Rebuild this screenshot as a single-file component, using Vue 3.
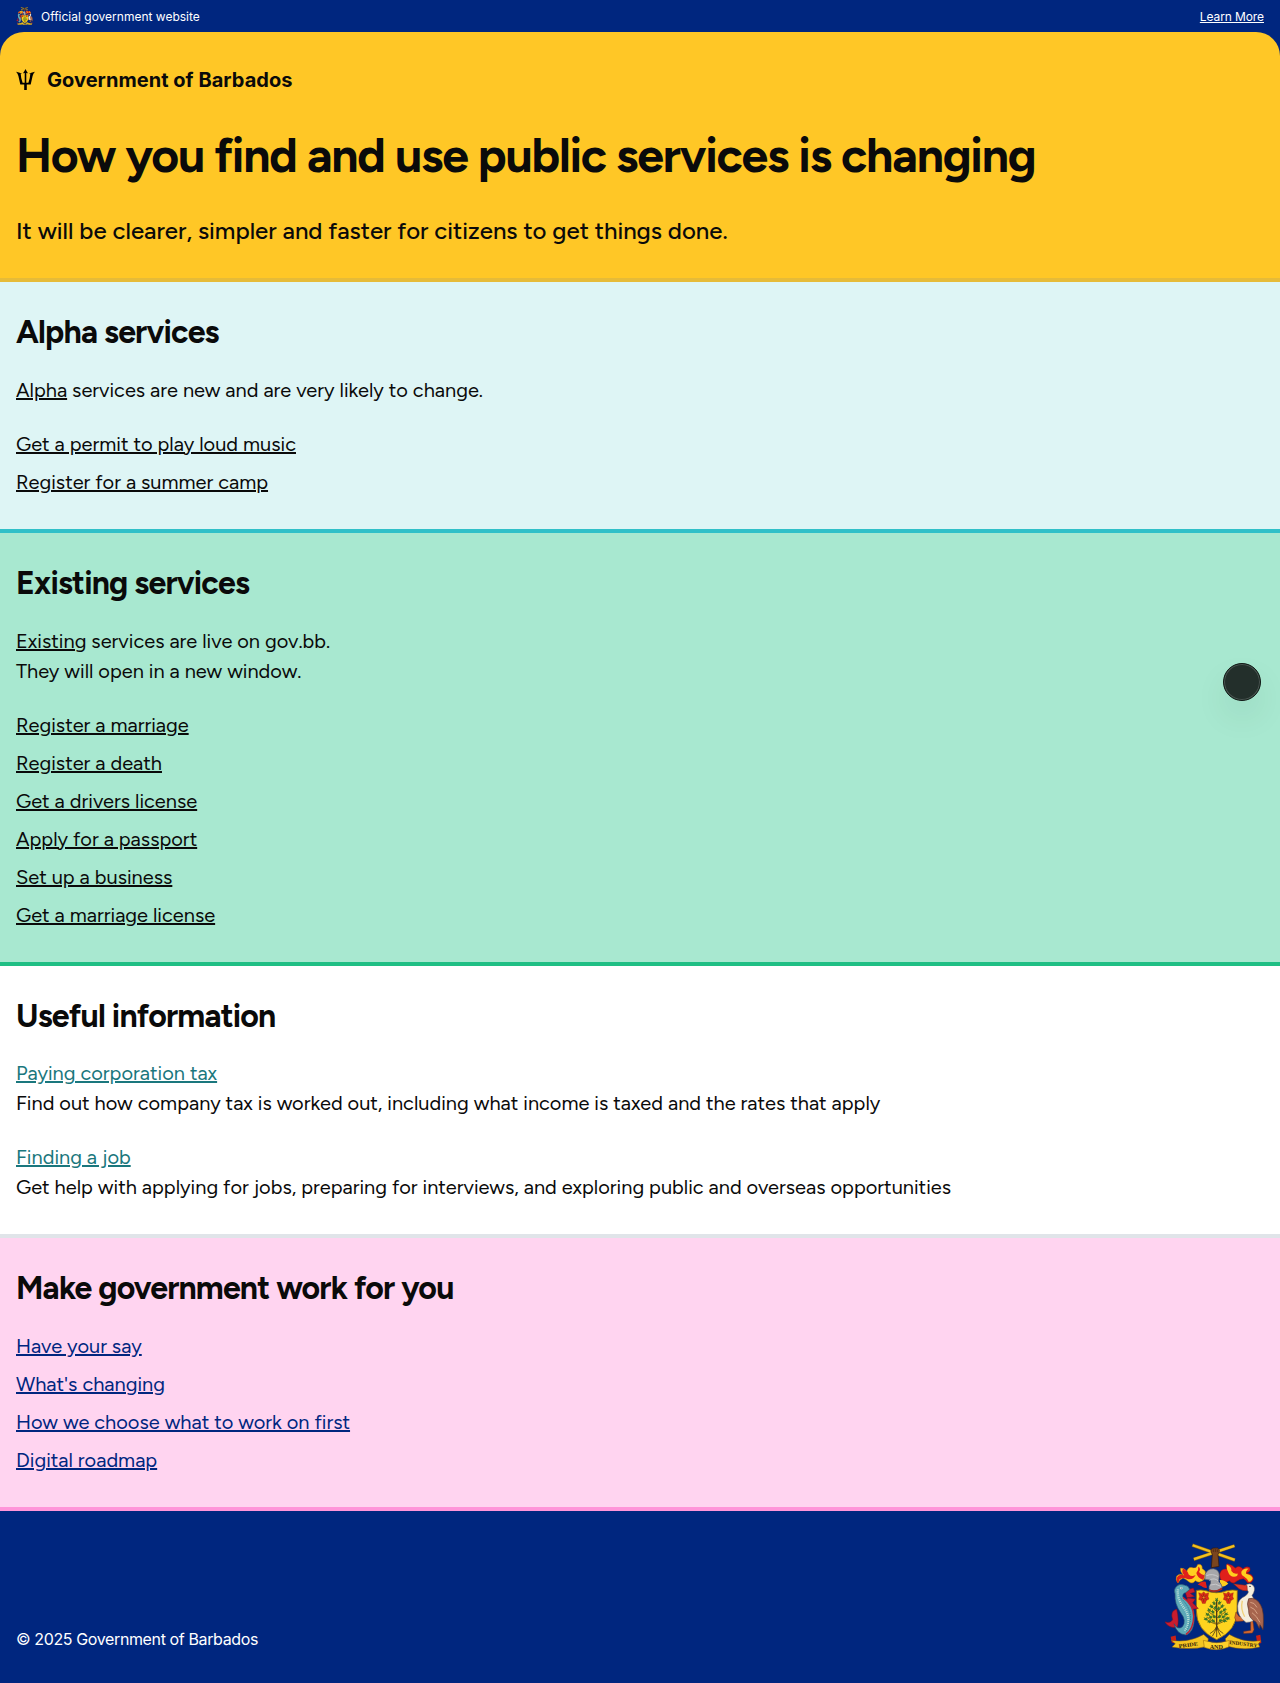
<script setup>
const alphaServices = ['Get a permit to play loud music', 'Register for a summer camp']

const existingServices = [
  'Register a marriage',
  'Register a death',
  'Get a drivers license',
  'Apply for a passport',
  'Set up a business',
  'Get a marriage license',
]

const usefulInformation = [
  {
    title: 'Paying corporation tax',
    text: 'Find out how company tax is worked out, including what income is taxed and the rates that apply',
  },
  {
    title: 'Finding a job',
    text: 'Get help with applying for jobs, preparing for interviews, and exploring public and overseas opportunities',
  },
]

const governmentLinks = [
  'Have your say',
  "What's changing",
  'How we choose what to work on first',
  'Digital roadmap',
]

// Leaf tufts of the fig tree on the shield: x, y, rotation
const leaves = [
  [200, 212, 0], [192, 222, -35], [209, 221, 35], [184, 232, -50], [217, 231, 50],
  [196, 236, -25], [206, 238, 30], [177, 243, -60], [224, 242, 60], [188, 248, -45],
  [213, 249, 45], [172, 256, -75], [229, 255, 75], [181, 264, -65], [221, 263, 65],
  [192, 262, -40], [209, 262, 40], [167, 270, -80], [234, 268, 80], [177, 277, -80],
  [225, 275, 80], [189, 275, -60], [212, 274, 60],
]
</script>

<template>
  <div class="page">
    <div class="official">
      <div class="official-label">
        <svg class="official-crest" viewBox="45 42 297 323" aria-hidden="true"><use href="#coat-of-arms" /></svg>
        <span>Official government website</span>
      </div>
      <a class="learn-more">Learn More</a>
    </div>

    <div class="hero-backdrop">
      <header class="hero">
        <div class="brand">
          <svg class="trident" viewBox="0 0 19 21" aria-hidden="true">
            <path d="M9.500 0 Q10.600 2.500 12 4.200 L10.300 4 L10.300 13.700 L12.400 13.700 Q14.100 9.300 14.300 4.700 L12.700 5 Q14.700 3.700 18.900 2.800 Q17.200 4.600 16.600 6.900 L14.700 15.500 L10.800 15.500 L10.800 21 L8.200 21 L8.200 15.500 L4.300 15.500 L2.400 6.900 Q1.800 4.600 .1 2.800 Q4.300 3.700 6.300 5 L4.700 4.700 Q4.900 9.300 6.600 13.700 L8.700 13.700 L8.700 4 L7 4.200 Q8.400 2.500 9.500 0 Z" />
          </svg>
          <span>Government of Barbados</span>
        </div>
        <h1>How you find and use public services is changing</h1>
        <p>It will be clearer, simpler and faster for citizens to get things done.</p>
      </header>
    </div>

    <main>
      <section class="alpha">
        <h2>Alpha services</h2>
        <p class="intro"><a>Alpha</a> services are new and are very likely to change.</p>
        <ul>
          <li v-for="name in alphaServices" :key="name"><a>{{ name }}</a></li>
        </ul>
      </section>

      <section class="existing">
        <h2>Existing services</h2>
        <p class="intro"><a>Existing</a> services are live on gov.bb.<br />They will open in a new window.</p>
        <ul>
          <li v-for="name in existingServices" :key="name"><a>{{ name }}</a></li>
        </ul>
      </section>

      <section class="useful">
        <h2>Useful information</h2>
        <div class="articles">
          <div v-for="item in usefulInformation" :key="item.title">
            <a>{{ item.title }}</a>
            <p>{{ item.text }}</p>
          </div>
        </div>
      </section>

      <section class="work">
        <h2>Make government work for you</h2>
        <ul>
          <li v-for="name in governmentLinks" :key="name"><a>{{ name }}</a></li>
        </ul>
      </section>
    </main>

    <footer>
      <span>© 2025 Government of Barbados</span>
      <svg class="footer-crest" viewBox="45 42 297 323" role="img" aria-label="Coat of arms">
        <g id="coat-of-arms">
          <!-- crossed sugar canes and raised arm -->
          <path d="M127 48 L255 93 M131 91 L254 50" stroke="#8a6310" stroke-width="10" />
          <path d="M128 48.500 L254 92.500 M132 90.500 L253 50.500" stroke="#f0c021" stroke-width="7" />
          <path d="M187 76 Q181 69 183 61 Q188 55 195 57 Q203 54 208 62 Q209 70 204 77 L207 112 L184 116 Z" fill="#7a451f" stroke="#321608" stroke-width="2" />
          <path d="M190 61 v8 M196 60 v9 M202 61 v8" stroke="#321608" stroke-width="1.500" />

          <!-- mantling -->
          <path d="M164 150 Q150 166 136 155 Q128 167 116 158 Q108 150 99 147 Q89 151 84 162 Q75 153 80 141 Q87 132 99 137 Q89 126 92 117 Q104 117 110 127 Q116 111 129 116 Q139 119 143 106 Q157 103 157 119 Q168 124 168 137 Z" fill="#ffcf1f" stroke="#a25a12" stroke-width="1.500" />
          <path d="M99 118 Q113 123 116 136 Q125 145 137 138 Q129 154 112 150 Q101 143 88 151 Q87 160 83 162 Q76 149 84 141 Q94 134 103 139 Q93 128 99 118 Z M145 112 Q154 119 147 129 Q154 138 164 139 L160 153 Q142 147 139 132 Q146 125 145 112 Z M143 166 Q155 155 167 158 L171 176 Q160 178 154 171 Z" fill="#e0201b" />
          <path d="M211 150 Q224 166 238 155 Q248 168 259 157 Q269 150 280 149 Q289 153 292 161 Q304 164 310 151 Q310 137 297 134 L290 132 Q304 128 299 115 Q288 109 279 120 Q267 106 256 117 Q247 107 232 104 Q226 110 230 120 Q213 118 209 136 Z" fill="#e0201b" stroke="#8e1410" stroke-width="1.500" />
          <path d="M230 106 Q246 112 244 126 Q251 136 263 133 Q264 143 252 143 Q239 142 235 130 Q229 118 230 106 Z M274 128 Q282 116 296 119 Q287 125 288 134 Q303 137 308 147 Q304 160 296 158 Q293 149 282 142 Q273 139 274 128 Z M209 153 Q222 151 235 164 Q224 174 213 174 Z" fill="#ffcf1f" />

          <!-- shield -->
          <path d="M139 184 Q153 181 168 185 Q200 197 230 185 Q247 181 262 184 L261 245 Q261 304 200 332 Q139 304 139 245 Z" fill="#ffd41f" stroke="#8b6413" stroke-width="2.500" />
          <g fill="none" stroke="#4f3b17" stroke-linecap="round">
            <path d="M200 214 V302" stroke-width="4" />
            <path d="M200 248 L181 229 M200 250 L219 230 M200 266 L174 247 M200 267 L227 248 M200 284 L171 265 M200 284 L232 265 M200 286 L178 278 M201 286 L224 276" stroke-width="2" />
            <path d="M200 293 Q195 306 181 313 M200 293 Q195 310 188 320 M200 294 V323 M201 293 Q206 306 219 313 M201 293 Q205 310 211 319" stroke-width="2.500" />
          </g>
          <g fill="#3d7428">
            <path
              v-for="([x, y, r], i) in leaves"
              :key="i"
              :transform="`translate(${x} ${y}) rotate(${r})`"
              d="M0 7 L-6 1 L-3 1 L-4 -6 L0 -3 L4 -7 L3 1 L6 1 Z"
            />
          </g>
          <g v-for="x in [161, 235]" :key="x" :transform="`translate(${x} 205)`">
            <path d="M-15 -14 L-6 -11 L0 -17 L6 -11 L15 -14 L13 -3 L16 5 L8 9 L5 18 L-4 18 L-7 9 L-15 6 L-12 -3 Z" fill="#dc2a18" stroke="#8d2510" stroke-width="1" />
            <path d="M-9 -7 L9 7 M9 -7 L-8 7 M0 -11 V13" stroke="#6f2d0d" stroke-width="1.800" />
            <circle r="3" fill="#e8901f" />
          </g>

          <!-- helmet -->
          <path d="M165 136 Q172 119 190 119 Q207 121 208 139 L206 157 Q215 164 217 176 Q201 191 177 183 L177 171 Q184 164 181 153 L165 151 Z" fill="#a7a7aa" stroke="#55565c" stroke-width="2" />
          <path d="M169 140 Q187 132 205 143 M178 154 Q193 144 205 156 M181 168 Q197 161 213 172" fill="none" stroke="#cfcfd1" stroke-width="2.500" />
          <path d="M177 180 Q195 189 216 175 L217 181 Q198 193 177 186 Z" fill="#a72822" />

          <!-- dolphin -->
          <path d="M80 240 Q59 246 68 272 Q61 284 44 278 Q57 299 82 295 Q88 275 80 240 Z M104 184 L130 177 L135 189 L121 193 L134 202 L111 207 Z M111 206 L136 210 L128 222 L145 238 L125 241 L134 257 L112 251 Z" fill="#c91c2f" stroke="#75101e" stroke-width="1.500" />
          <path d="M79 172 Q89 162 103 168 Q116 169 119 181 L107 191 Q96 193 99 205 Q133 227 133 262 Q134 308 108 318 Q80 316 72 284 Q83 304 97 293 Q111 276 92 251 Q73 225 75 194 Q69 183 79 172 Z" fill="#5da9b8" stroke="#244f70" stroke-width="2" />
          <path d="M84 181 Q79 210 105 240 Q126 276 104 305" fill="none" stroke="#bce0d8" stroke-width="7" stroke-dasharray="3 3" />
          <path d="M99 205 Q131 229 131 262 Q130 300 108 316" fill="none" stroke="#c91c2f" stroke-width="4" />
          <path d="M92 207 Q119 231 122 263 Q120 292 107 309" fill="none" stroke="#2d7a91" stroke-width="3" stroke-dasharray="4 3" />
          <circle cx="94" cy="177" r="3.500" fill="#fff" />
          <circle cx="94" cy="177" r="1.500" fill="#111" />

          <!-- pelican -->
          <path d="M286 264 L280 276 L259 277 L254 266 L258 249 L267 262 Z M302 273 V304 L281 307 L281 313 L307 312 L312 302 L308 272 Z" fill="#d66a31" stroke="#763214" stroke-width="1.500" />
          <path d="M285 170 Q299 158 311 171 Q318 183 306 199 Q319 220 324 257 Q313 281 288 280 Q261 262 263 231 Q265 209 286 201 Q302 187 290 183 Z" fill="#f4efdf" stroke="#76665c" stroke-width="1.500" />
          <path d="M296 209 Q319 203 332 228 Q344 248 339 302 L330 287 L328 298 L318 279 Q294 267 296 243 Q289 223 296 209 Z" fill="#a7654e" stroke="#5b3029" stroke-width="2" />
          <path d="M301 220 Q313 219 321 235 M301 234 Q315 238 322 254 M306 251 Q320 260 330 280" fill="none" stroke="#d7a184" stroke-width="3" />
          <path d="M250 164 L291 169 L292 184 Q280 187 267 179 Z" fill="#df3828" stroke="#811d18" stroke-width="1.500" />
          <circle cx="300" cy="172" r="2" fill="#111" />
          <path d="M277 215 Q271 239 284 263" fill="none" stroke="#f0d179" stroke-width="4" />

          <!-- motto ribbon -->
          <path d="M62 323 L77 319 L80 344 L65 340 Z M318 320 L331 317 L334 342 L322 345 Z" fill="#c92118" />
          <path d="M64 334 Q117 342 161 316 L175 329 L171 352 Q119 364 66 354 L76 344 Z M333 335 Q281 342 238 316 L226 329 L230 351 Q281 366 329 354 L325 344 Z" fill="#f5c521" stroke="#8a5c0c" stroke-width="1.500" />
          <path d="M160 334 L174 337 Q200 345 227 337 L238 334 L236 354 Q200 369 163 355 Z" fill="#ffd12a" stroke="#8a5c0c" stroke-width="1.500" />
          <g fill="#33220a" font-family="Liberation Serif, serif" font-size="16" font-weight="700" letter-spacing="0">
            <text x="86" y="353" textLength="58" lengthAdjust="spacingAndGlyphs" transform="rotate(-8 115 347)">PRIDE</text>
            <text x="179" y="359" textLength="40" lengthAdjust="spacingAndGlyphs">AND</text>
            <text x="238" y="350" textLength="84" lengthAdjust="spacingAndGlyphs" transform="rotate(7 280 345)">INDUSTRY</text>
          </g>
        </g>
      </svg>
    </footer>

    <button class="floating" aria-label="Open toolbar"></button>
  </div>
</template>

<style>
body {
  margin: 0;
}
</style>

<style scoped>
.page {
  position: relative;
  font-family: Figtree, Lato, sans-serif;
  font-size: 20px;
  line-height: 30px;
  color: #0a0a0a;
}
h1,
h2,
p,
ul {
  margin: 0;
  padding: 0;
}
ul {
  display: flex;
  flex-direction: column;
  gap: 8px;
  list-style: none;
}
a {
  text-decoration: underline;
  text-decoration-thickness: 2px;
}
.official {
  display: flex;
  justify-content: space-between;
  align-items: center;
  height: 32px;
  padding: 0 16px;
  background: #00267f;
  color: #fff;
  font: 12px/18px Inter, sans-serif;
}
.official-label {
  display: flex;
  align-items: center;
  gap: 8px;
}
.official-label span,
.learn-more {
  padding-top: 2px;
}
.official-crest {
  width: 17px;
  height: 18px;
}
.learn-more {
  letter-spacing: -0.1px;
  text-decoration-thickness: 1px;
}
.hero-backdrop {
  background: #00267f;
}
.hero-backdrop::after {
  content: '';
  display: block;
  height: 4px;
  background: #e6bb38;
}
.hero {
  display: flex;
  flex-direction: column;
  gap: 32px;
  padding: 32px 16px;
  border-radius: 24px 24px 0 0;
  background: #ffc726;
}
.brand {
  display: flex;
  align-items: center;
  gap: 12px;
  height: 32px;
  font: 700 20px/32px Inter, sans-serif;
  letter-spacing: 0.04px;
}
.trident {
  width: 19px;
  height: 21px;
  margin-bottom: 1px;
}
h1 {
  font-size: 48px;
  line-height: 55.2px;
  font-weight: 700;
  letter-spacing: -0.025em;
}
.hero p {
  margin: 0.6px 0 -0.6px;
  font-size: 24px;
  line-height: 30.8px;
  font-weight: 500;
}
section {
  display: flex;
  flex-direction: column;
  gap: 24px;
  padding: 32px 16px;
  border-bottom: 4px solid;
}
h2 {
  font-size: 32px;
  line-height: 36.8px;
  font-weight: 700;
  letter-spacing: -0.025em;
}
.alpha {
  background: #def5f5;
  border-color: #30c0c8;
}
.existing {
  background: #a8e8d0;
  border-color: #1fbf84;
}
.useful {
  background: #fff;
  border-color: #e0e4e9;
}
.useful a {
  color: #1a777d;
}
.articles {
  display: flex;
  flex-direction: column;
  gap: 24px;
}
.work {
  background: #ffd4f0;
  border-color: #ff94d9;
}
.work a {
  color: #00267f;
}
footer {
  display: flex;
  justify-content: space-between;
  align-items: flex-end;
  padding: 32px 16px;
  background: #00267f;
  color: #fff;
  font: 16px/24px Inter, sans-serif;
  letter-spacing: -0.38px;
}
.footer-crest {
  width: 99px;
  height: 107.8px;
}
.floating {
  position: absolute;
  top: 663px;
  right: 19px;
  width: 38px;
  height: 38px;
  padding: 0;
  border: 1px solid #101915;
  border-radius: 50%;
  background: #232f2b;
  box-shadow: inset 0 0 0 1px #4c5753, 0 16px 32px rgba(0, 60, 40, 0.08);
}
</style>
